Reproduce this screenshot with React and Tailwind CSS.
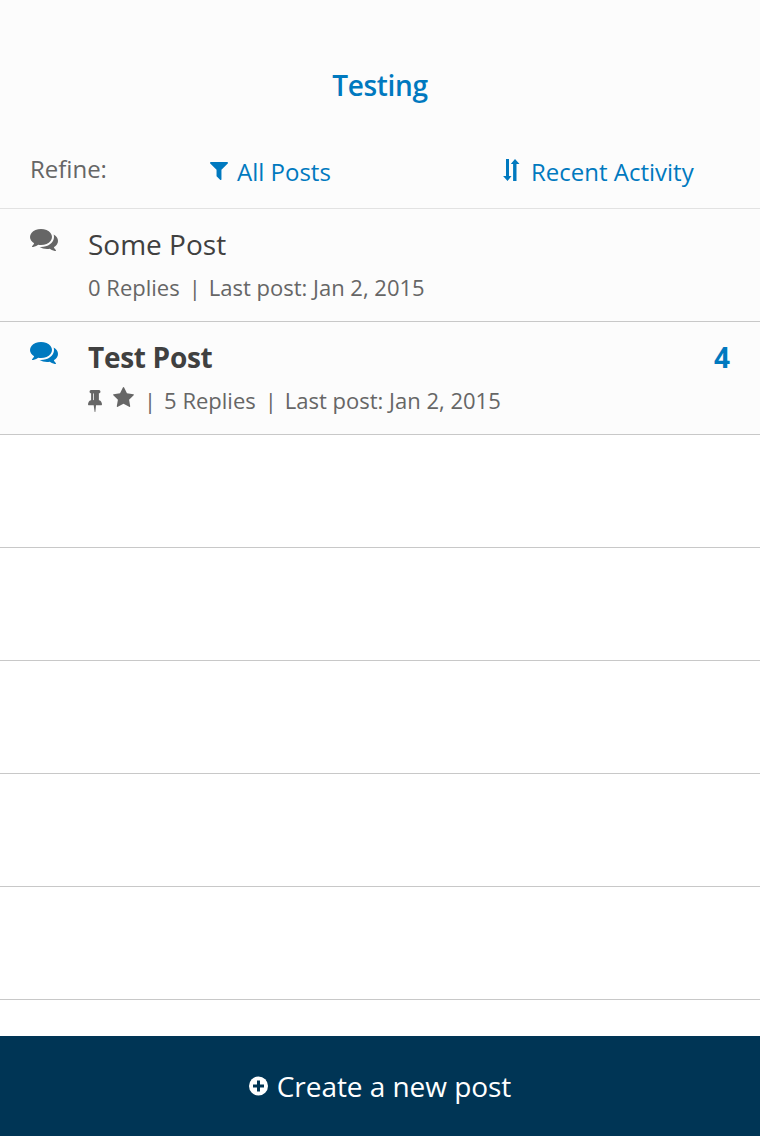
function CommentsIcon({ className }) {
  return (
    <svg viewBox="0 0 1792 1536" className={className} fill="currentColor">
      <path d="M1408 640q0 139-94 257t-256.500 186.500T704 1152q-86 0-176-16-124 88-278 128-36 9-86 16h-3q-11 0-20.500-8t-11.500-21q-1-3-1-6.500t.5-6.500 2-6l2.500-5 3.500-5.500 4-5 4.500-5 4-4.500q5-6 23-25t26-29.500 22.500-29 25-38.500 20.500-44Q142 974 71 866T0 640q0-139 94-257t256.500-186.500T704 128t353.500 68.500T1314 383t94 257zm384 256q0 120-71 224.500T1526 1293q10 24 20.500 44t25 38.500 22.500 29 26 29.500 23 25q1 1 4 4.500t4.500 5 4 5 3.500 5.500l2.500 5 2 6 .5 6.500-1 6.500q-3 14-13 22t-22 7q-50-7-86-16-154-40-278-128-90 16-176 16-271 0-472-132 58 4 88 4 161 0 309-45t264-129q125-92 192-212t67-254q0-77-23-152 129 71 204 178t75 230z" />
    </svg>
  );
}

function FilterIcon() {
  return (
    <svg viewBox="0 0 1408 1408" className="h-[18px] w-[18px] -translate-y-px" fill="currentColor">
      <path d="M1403 39q17 41-14 70L896 602v742q0 42-39 59-13 5-25 5-27 0-45-19l-256-256q-19-19-19-45V602L19 109Q-12 80 5 39 22 0 64 0h1280q42 0 59 39z" />
    </svg>
  );
}

function SortIcon() {
  return (
    <svg viewBox="0 0 18 24" className="h-6 w-[18px] -translate-y-0.5" fill="currentColor">
      <path d="M3 1h3v17h2.500L4.500 23 .1 18H3zM10.100 23h3.400V6h3L12 1 7.800 6h2.300z" />
    </svg>
  );
}

function PinIcon() {
  return (
    <svg viewBox="0 0 1152 1600" className="h-[22px] w-[14px] translate-y-px" preserveAspectRatio="none" fill="currentColor">
      <path transform="translate(0 -64) scale(1 .963)" d="M480 800V352q0-14-9-23t-23-9-23 9-9 23v448q0 14 9 23t23 9 23-9 9-23zm672 352q0 26-19 45t-45 19H659l-51 483q-2 12-10.500 20.500T577 1728h-1q-27 0-32-27l-76-485H64q-26 0-45-19t-19-45q0-123 78.500-221.500T256 832V320q-52 0-90-38t-38-90 38-90 90-38h640q52 0 90 38t38 90-38 90-90 38v512q99 0 177.500 98.500T1152 1152z" />
    </svg>
  );
}

function StarIcon() {
  return (
    <svg viewBox="0 0 1664 1587" className="mr-[10px] ml-[11px] h-5 w-[21px] -translate-y-[3px]" fill="currentColor">
      <path d="M1664 615q0 22-26 48l-363 354 86 500q1 7 1 20 0 21-10.500 35.500T1321 1587q-19 0-40-12l-449-236-449 236q-22 12-40 12-21 0-31.500-14.500T301 1537q0-6 2-20l86-500L25 663Q0 636 0 615q0-37 56-46l502-73L783 41q19-41 49-41t49 41l225 455 502 73q56 9 56 46z" />
    </svg>
  );
}

function PlusIcon() {
  return (
    <svg viewBox="0 0 20 20" className="h-5 w-5 -translate-x-[0.5px]">
      <circle cx="10" cy="10" r="9.500" fill="currentColor" />
      <path d="M10 4.500v11M4.500 10h11" stroke="#003555" strokeWidth="3" />
    </svg>
  );
}

function Divider() {
  return <span className="mr-2 ml-[9px]">|</span>;
}

function Post({ title, unread, count, pinned, replies, date }) {
  return (
    <article className="flex h-[113px] shrink-0 border-b border-[#c8c8c8] bg-[#fcfcfc] px-[30px]">
      <div className="w-[58px] pt-[18px]">
        <CommentsIcon className={unread ? "h-6 w-7 text-[#0079bf]" : "h-6 w-7 text-[#666]"} />
      </div>
      <div className="flex-1">
        <h2 className={unread ? "mt-[15px] text-[28px] leading-10 font-bold tracking-[-0.3px] text-[#404040]" : "mt-[15px] text-[28px] leading-10 text-[#404040]"}>{title}</h2>
        <p className="mt-2 flex h-[30px] items-center text-[22px] leading-[30px] text-[#666]">
          {pinned && <><PinIcon /><StarIcon /><span className="mr-2">|</span></>}
          <span>{replies} Replies</span><Divider /><span>Last post: {date}</span>
        </p>
      </div>
      {count && <span className="mt-[15px] text-[28px] leading-10 font-bold text-[#0079bf]">{count}</span>}
    </article>
  );
}

export default function App() {
  return (
    <main className="flex h-[1136px] w-[760px] flex-col overflow-hidden bg-white font-['Open_Sans',sans-serif]">
      <header className="h-[209px] shrink-0 border-b border-[#e2e2e2] bg-[#fcfcfc]">
        <h1 className="pt-[65px] text-center text-[28px] leading-10 font-semibold tracking-[-0.3px] text-[#0079bf]">Testing</h1>
        <div className="mt-[47px] flex h-10 text-2xl leading-10">
          <span className="-mt-[3px] w-[210px] pl-[30px] text-[#666]">Refine:</span>
          <button className="flex w-[293px] items-center gap-[9px] text-[#0079bf]"><FilterIcon />All Posts</button>
          <button className="flex items-center gap-[10px] text-[#0079bf]"><SortIcon />Recent Activity</button>
        </div>
      </header>
      <Post title="Some Post" replies="0" date="Jan 2, 2015" />
      <Post title="Test Post" unread pinned count="4" replies="5" date="Jan 2, 2015" />
      {[1, 2, 3, 4, 5].map((row) => <div key={row} className="h-[113px] shrink-0 border-b border-[#c8c8c8]" />)}
      <footer className="mt-auto h-[100px] shrink-0 bg-[#003555] text-white">
        <button className="flex h-full w-full items-center justify-center gap-2 text-[28px] tracking-[-0.05px]"><PlusIcon />Create a new post</button>
      </footer>
    </main>
  );
}
